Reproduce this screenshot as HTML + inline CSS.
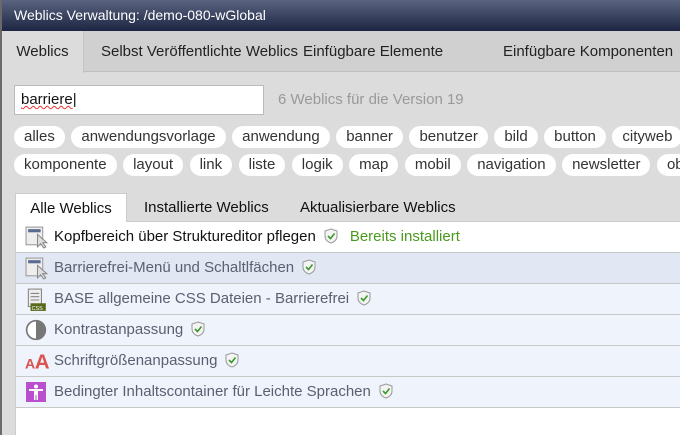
<!DOCTYPE html>
<html><head><meta charset="utf-8"><style>
*{box-sizing:border-box;margin:0;padding:0}
body{width:680px;height:435px;overflow:hidden;font-family:"Liberation Sans",sans-serif;background:#dcdcdc;position:relative}
.lb{position:absolute;left:0;top:0;width:2px;height:435px;background:#6a6a6a;z-index:5}
.title{position:absolute;left:0;top:0;width:680px;height:31px;background:linear-gradient(#5a6480,#1c2542);color:#fff;font-size:14px;line-height:31px;padding-left:14px}
.tabs{position:absolute;left:0;top:31px;width:680px;height:41px;background:#d0d0d0;border-bottom:1px solid #c0c0c0}
.tabs span{position:absolute;top:0;line-height:41px;font-size:15px;color:#222}
.tabs .act{left:2px;width:82px;height:42px;background:#dcdcdc;text-align:center;color:#222;border-right:1px solid #c4c4c4}
.search{position:absolute;left:14px;top:85px;width:250px;height:30px;background:#fff;border:1px solid #bbb;font-size:15px;line-height:28px;padding-left:6px;color:#111}
.search u{text-decoration:underline wavy #e33;text-decoration-thickness:1px}
.cnt{position:absolute;left:278px;top:85px;line-height:30px;font-size:15px;color:#999}
.pills{position:absolute;left:14px;font-size:15px;color:#333;white-space:nowrap}
.pills span{display:inline-block;background:#fff;border-radius:12px;height:22px;line-height:22px;padding:0 10px;margin-right:6.5px}
.lt{position:absolute;left:15px;top:193px;width:665px;height:29px;border-bottom:1px solid #ccc}
.lt span{position:absolute;top:0;line-height:29px;font-size:15px;color:#111}
.lt .act{left:0;width:112px;height:30px;background:#fff;border:1px solid #ccc;border-bottom:none;text-align:center}
.panel{position:absolute;left:15px;top:222px;width:665px;height:213px;background:#fff;border-left:1px solid #ccc}
.row{height:31px;border-bottom:1px solid #c8c8c8;background:#eff3fb;font-size:15px;line-height:30px;color:#5a6070;position:relative;padding-left:38px}
.row svg.i{position:absolute;left:9px;top:4px}
.row.w{background:#fff;color:#111}
.row.s{background:#e1e7f3}
.sh{display:inline-block;vertical-align:-3px;margin-left:8px}
.g{color:#4a9a1e;margin-left:12px}
</style></head><body>
<div class="lb"></div>
<div class="title">Weblics Verwaltung: /demo-080-wGlobal</div>
<div class="tabs">
<span class="act">Weblics</span>
<span style="left:101px">Selbst Veröffentlichte Weblics</span>
<span style="left:303px">Einfügbare Elemente</span>
<span style="left:503px">Einfügbare Komponenten</span>
</div>
<div class="search"><u>barriere</u>|</div>
<div class="cnt">6 Weblics für die Version 19</div>
<div class="pills" style="top:126px"><span>alles</span><span>anwendungsvorlage</span><span>anwendung</span><span>banner</span><span>benutzer</span><span>bild</span><span>button</span><span>cityweb</span></div>
<div class="pills" style="top:154px"><span>komponente</span><span>layout</span><span>link</span><span>liste</span><span>logik</span><span>map</span><span>mobil</span><span>navigation</span><span>newsletter</span><span>ob</span></div>
<div class="lt"><span class="act">Alle Weblics</span><span style="left:129px">Installierte Weblics</span><span style="left:285px">Aktualisierbare Weblics</span></div>
<svg width="0" height="0" style="position:absolute"><defs>
<symbol id="sh" viewBox="0 0 14 16"><path d="M7 1 L13 3 V8 C13 12 10 14 7 15 C4 14 1 12 1 8 V3 Z" fill="#f4f4f4" stroke="#999"/><path d="M4 8 L6.5 10.5 L10.5 5.5" fill="none" stroke="#3a9a2a" stroke-width="1.6"/></symbol>
<symbol id="ed" viewBox="0 0 24 22"><rect x="1" y="1" width="16" height="17" fill="#eee" stroke="#999"/><rect x="3" y="3" width="12" height="3" fill="#5a6a90"/><path d="M12 8 L12 20 L15 17 L18 21 L20 20 L17 16 L21 16 Z" fill="#ddd" stroke="#888"/></symbol>
</defs></svg>
<div class="panel">
<div class="row w"><svg class="i" width="25" height="23"><use href="#ed"/></svg>Kopfbereich über Struktureditor pflegen<svg class="sh" width="14" height="16"><use href="#sh"/></svg><span class="g">Bereits installiert</span></div>
<div class="row s"><svg class="i" width="25" height="23"><use href="#ed"/></svg>Barrierefrei-Menü und Schaltlfächen<svg class="sh" width="14" height="16"><use href="#sh"/></svg></div>
<div class="row"><svg class="i" width="22" height="24" viewBox="0 0 20 22"><rect x="3" y="1" width="12" height="16" fill="#eee" stroke="#888"/><path d="M5 5h8M5 8h8M5 11h8" stroke="#888"/><rect x="5" y="14" width="14" height="7" fill="#5a6a1a"/><text x="6" y="20" font-size="5" fill="#fff" font-family="Liberation Sans">CSS</text></svg>BASE allgemeine CSS Dateien - Barrierefrei<svg class="sh" width="14" height="16"><use href="#sh"/></svg></div>
<div class="row"><svg class="i" width="22" height="22" viewBox="0 0 20 20"><circle cx="10" cy="10" r="8.5" fill="#fff" stroke="#777" stroke-width="1.5"/><path d="M10 1.5 A8.5 8.5 0 0 1 10 18.5 Z" fill="#777"/></svg>Kontrastanpassung<svg class="sh" width="14" height="16"><use href="#sh"/></svg></div>
<div class="row"><svg class="i" width="26" height="22" viewBox="0 0 24 20"><text x="0" y="17" font-size="13" fill="#d9534f" font-family="Liberation Sans" font-weight="bold">A</text><text x="9" y="17" font-size="19" fill="#d9534f" font-family="Liberation Sans" font-weight="bold">A</text></svg>Schriftgrößenanpassung<svg class="sh" width="14" height="16"><use href="#sh"/></svg></div>
<div class="row"><svg class="i" width="20" height="20" viewBox="0 0 20 20" style="left:10px;top:5px"><rect width="20" height="20" fill="#b94fcf"/><circle cx="10" cy="4.5" r="2" fill="#fff"/><path d="M3 7h14v2h-5v9h-1.5v-5h-1v5H8V9H3z" fill="#fff"/></svg>Bedingter Inhaltscontainer für Leichte Sprachen<svg class="sh" width="14" height="16"><use href="#sh"/></svg></div>
</div>
</body></html>
